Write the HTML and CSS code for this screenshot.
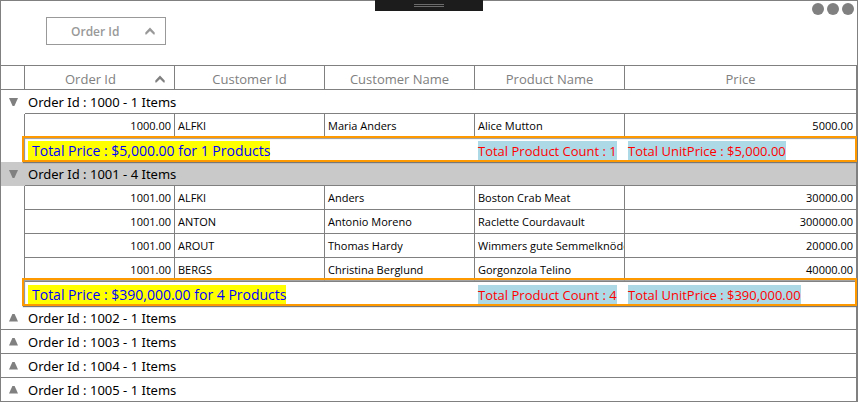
FILE: index.html
```
<!DOCTYPE html>
<html lang="en">
<head>
<meta charset="utf-8">
<title>Orders</title>
<link rel="stylesheet" href="styles.css">
</head>
<body>
<header class="panel">
  <button class="chip" type="button"><span class="chip-label">Order Id</span>
    <svg class="caret" viewBox="0 0 10 8" aria-hidden="true"><path d="M0.3 7.5V5.4L5 0.5L9.7 5.4V7.5H8.6L5 4L1.4 7.5Z"/></svg>
  </button>
  <button class="handle" type="button" aria-label="Toggle toolbar"><span class="grip"></span></button>
  <button class="more" type="button" aria-label="More options"><span class="dot"></span><span class="dot"></span><span class="dot"></span></button>
</header>
<table class="grid">
  <colgroup><col class="c-indent"><col class="c-col"><col class="c-col"><col class="c-col"><col class="c-col"><col></colgroup>
  <thead>
    <tr class="head">
      <td></td>
      <th scope="col"><div class="sorted"><span class="sorted-label">Order Id</span><svg class="caret" viewBox="0 0 10 8" aria-hidden="true"><path d="M0.3 7.5V5.4L5 0.5L9.7 5.4V7.5H8.6L5 4L1.4 7.5Z"/></svg></div></th>
      <th scope="col">Customer Id</th><th scope="col">Customer Name</th><th scope="col">Product Name</th><th scope="col">Price</th>
    </tr>
  </thead>
  <tbody>
    <tr class="group open"><td class="toggle"><button class="tri down" type="button" aria-label="Collapse 1000"></button></td><td colspan="5">Order Id : 1000 - 1 Items</td></tr>
    <tr class="row"><td class="indent"></td><td class="num">1000.00</td><td>ALFKI</td><td>Maria Anders</td><td>Alice Mutton</td><td class="num">5000.00</td></tr>
    <tr class="summary"><td class="indent"></td><td colspan="3"><span class="total">Total Price : $5,000.00 for 1 Products</span></td><td><span class="part">Total Product Count : 1</span></td><td><span class="part">Total UnitPrice : $5,000.00</span></td></tr>
    <tr class="group open current"><td class="toggle"><button class="tri down" type="button" aria-label="Collapse 1001"></button></td><td colspan="5">Order Id : 1001 - 4 Items</td></tr>
    <tr class="row"><td class="indent"></td><td class="num">1001.00</td><td>ALFKI</td><td>Anders</td><td>Boston Crab Meat</td><td class="num">30000.00</td></tr>
    <tr class="row"><td class="indent"></td><td class="num">1001.00</td><td>ANTON</td><td>Antonio Moreno</td><td>Raclette Courdavault</td><td class="num">300000.00</td></tr>
    <tr class="row"><td class="indent"></td><td class="num">1001.00</td><td>AROUT</td><td>Thomas Hardy</td><td>Wimmers gute Semmelknödel</td><td class="num">20000.00</td></tr>
    <tr class="row"><td class="indent"></td><td class="num">1001.00</td><td>BERGS</td><td>Christina Berglund</td><td>Gorgonzola Telino</td><td class="num">40000.00</td></tr>
    <tr class="summary tall"><td class="indent"></td><td colspan="3"><span class="total">Total Price : $390,000.00 for 4 Products</span></td><td><span class="part">Total Product Count : 4</span></td><td><span class="part">Total UnitPrice : $390,000.00</span></td></tr>
    <tr class="group"><td class="toggle"><button class="tri up" type="button" aria-label="Expand 1002"></button></td><td colspan="5">Order Id : 1002 - 1 Items</td></tr>
    <tr class="group"><td class="toggle"><button class="tri up" type="button" aria-label="Expand 1003"></button></td><td colspan="5">Order Id : 1003 - 1 Items</td></tr>
    <tr class="group"><td class="toggle"><button class="tri up" type="button" aria-label="Expand 1004"></button></td><td colspan="5">Order Id : 1004 - 1 Items</td></tr>
    <tr class="group"><td class="toggle"><button class="tri up" type="button" aria-label="Expand 1005"></button></td><td colspan="5">Order Id : 1005 - 1 Items</td></tr>
  </tbody>
</table>
</body>
</html>
```
FILE: styles.css
```
* { box-sizing: border-box; }
body {
  margin: 0 1px 0 0;
  background: #fff;
  color: #000;
  font-family: "Open Sans", "Noto Sans", sans-serif;
  font-size: 13px;
}
button { font: inherit; padding: 0; border: 0; background: none; }
.panel {
  position: relative;
  height: 65px;
  padding: 16px 45px 0;
  border: 1px solid #808080;
  border-bottom: 0;
}
.chip {
  display: flex;
  align-items: center;
  width: 120px;
  height: 28px;
  padding: 0 10px 0 24px;
  border: 1px solid #999;
  color: #999;
  font-size: 12px;
  font-weight: 600;
}
.chip .caret { fill: #999; }
.chip-label, .sorted-label { flex: 1; text-align: left; }
.caret { width: 10px; height: 8px; fill: #808080; }
.handle {
  position: absolute;
  top: -1px;
  left: calc(50% - 54px);
  width: 108px;
  height: 11px;
  background: #1c1c1c;
}
.grip {
  display: block;
  width: 30px;
  height: 3px;
  margin: 0 auto;
  border: solid #6b6b6b;
  border-width: 1px 0;
}
.more { position: absolute; top: 2px; right: 3px; display: flex; gap: 3px; }
.dot { width: 12px; height: 12px; border-radius: 50%; background: #808080; }
.grid {
  width: 100%;
  table-layout: fixed;
  border-collapse: separate;
  border-spacing: 0;
  border: solid #808080;
  border-width: 1px 1px 0;
}
.c-indent { width: 24px; }
.c-col { width: 150px; }
td, th {
  height: 24px;
  padding: 0 3px;
  border: solid #808080;
  border-width: 0 1px 1px 0;
  line-height: 18px;
  white-space: nowrap;
  overflow: hidden;
}
th { color: #808080; font-weight: 400; padding-top: 2px; }
.sorted { display: flex; align-items: center; padding: 0 6px 0 37px; }
.group td { text-align: left; font-family: "Noto Sans", "Open Sans", sans-serif; }
.group .toggle { padding: 0; border-right: 0; }
.open .toggle, .indent { border-bottom: 0; }
.current td { background: #c9c9c9; }
.tri { display: block; width: 9px; height: 8px; margin-left: 8px; background: #808080; }
.down { clip-path: polygon(0 0, 100% 0, 60% 100%, 40% 100%); }
.up { clip-path: polygon(40% 0, 60% 0, 100% 100%, 0 100%); }
.row td { font-size: 11px; padding-right: 0; }
.row .num { text-align: right; padding-right: 3px; }
.summary { position: relative; }
.summary td { border-right-width: 0; }
.summary .indent { border-right-width: 1px; border-bottom-width: 1px; }
.summary td:last-child::after {
  content: "";
  position: absolute;
  top: -2px;
  right: 0;
  bottom: 0;
  left: 21px;
  border: 2px solid #ff9900;
  box-shadow: 1px 1px 1px #777, inset 1px 1px 1px #999;
  pointer-events: none;
}
.tall td:last-child::after { top: -4px; }
.total, .part { display: inline-block; padding-top: 1px; line-height: 18px; vertical-align: middle; }
.total { padding-left: 4px; background: #ff0; color: #00f; font-size: 14px; }
.part { background: #add8e6; color: #f00; }
```
